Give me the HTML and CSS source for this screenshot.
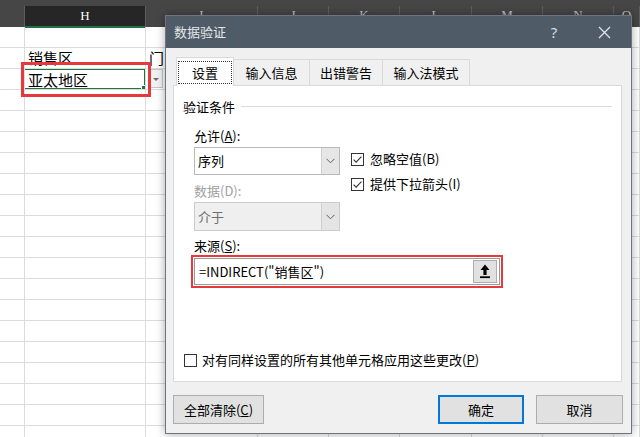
FILE: index.html
```html
<!DOCTYPE html>
<html lang="zh-CN">
<head>
<meta charset="utf-8">
<title>数据验证</title>
<link rel="stylesheet" href="styles.css">
</head>
<body>
<div class="sheet">
  <div class="colhead">
    <div class="hc"></div>
    <div class="hc sel">H</div>
    <div class="hc">I</div>
    <div class="hc">J</div>
    <div class="hc">K</div>
    <div class="hc">L</div>
    <div class="hc">M</div>
    <div class="hc">N</div>
    <div class="hc">O</div>
  </div>
  <div class="row"><div class="c"></div><div class="c"></div><div class="c"></div><div class="c"></div><div class="c"></div><div class="c"></div><div class="c"></div><div class="c"></div><div class="c"></div></div>
  <div class="row"><div class="c"></div><div class="c txt">销售区</div><div class="c txt">门</div><div class="c"></div><div class="c"></div><div class="c"></div><div class="c"></div><div class="c"></div><div class="c"></div></div>
  <div class="row"><div class="c"></div><div class="c txt active">亚太地区</div><div class="c"></div><div class="c"></div><div class="c"></div><div class="c"></div><div class="c"></div><div class="c"></div><div class="c"></div></div>
  <div class="row"><div class="c"></div><div class="c"></div><div class="c"></div><div class="c"></div><div class="c"></div><div class="c"></div><div class="c"></div><div class="c"></div><div class="c"></div></div>
  <div class="row"><div class="c"></div><div class="c"></div><div class="c"></div><div class="c"></div><div class="c"></div><div class="c"></div><div class="c"></div><div class="c"></div><div class="c"></div></div>
  <div class="row"><div class="c"></div><div class="c"></div><div class="c"></div><div class="c"></div><div class="c"></div><div class="c"></div><div class="c"></div><div class="c"></div><div class="c"></div></div>
  <div class="row"><div class="c"></div><div class="c"></div><div class="c"></div><div class="c"></div><div class="c"></div><div class="c"></div><div class="c"></div><div class="c"></div><div class="c"></div></div>
  <div class="row"><div class="c"></div><div class="c"></div><div class="c"></div><div class="c"></div><div class="c"></div><div class="c"></div><div class="c"></div><div class="c"></div><div class="c"></div></div>
  <div class="row"><div class="c"></div><div class="c"></div><div class="c"></div><div class="c"></div><div class="c"></div><div class="c"></div><div class="c"></div><div class="c"></div><div class="c"></div></div>
  <div class="row"><div class="c"></div><div class="c"></div><div class="c"></div><div class="c"></div><div class="c"></div><div class="c"></div><div class="c"></div><div class="c"></div><div class="c"></div></div>
  <div class="row"><div class="c"></div><div class="c"></div><div class="c"></div><div class="c"></div><div class="c"></div><div class="c"></div><div class="c"></div><div class="c"></div><div class="c"></div></div>
  <div class="row"><div class="c"></div><div class="c"></div><div class="c"></div><div class="c"></div><div class="c"></div><div class="c"></div><div class="c"></div><div class="c"></div><div class="c"></div></div>
  <div class="row"><div class="c"></div><div class="c"></div><div class="c"></div><div class="c"></div><div class="c"></div><div class="c"></div><div class="c"></div><div class="c"></div><div class="c"></div></div>
  <div class="row"><div class="c"></div><div class="c"></div><div class="c"></div><div class="c"></div><div class="c"></div><div class="c"></div><div class="c"></div><div class="c"></div><div class="c"></div></div>
  <div class="row"><div class="c"></div><div class="c"></div><div class="c"></div><div class="c"></div><div class="c"></div><div class="c"></div><div class="c"></div><div class="c"></div><div class="c"></div></div>
  <div class="row"><div class="c"></div><div class="c"></div><div class="c"></div><div class="c"></div><div class="c"></div><div class="c"></div><div class="c"></div><div class="c"></div><div class="c"></div></div>
  <div class="row"><div class="c"></div><div class="c"></div><div class="c"></div><div class="c"></div><div class="c"></div><div class="c"></div><div class="c"></div><div class="c"></div><div class="c"></div></div>
  <div class="row"><div class="c"></div><div class="c"></div><div class="c"></div><div class="c"></div><div class="c"></div><div class="c"></div><div class="c"></div><div class="c"></div><div class="c"></div></div>
  <div class="row"><div class="c"></div><div class="c"></div><div class="c"></div><div class="c"></div><div class="c"></div><div class="c"></div><div class="c"></div><div class="c"></div><div class="c"></div></div>
  <div class="row"><div class="c"></div><div class="c"></div><div class="c"></div><div class="c"></div><div class="c"></div><div class="c"></div><div class="c"></div><div class="c"></div><div class="c"></div></div>
</div>

<div class="cell-dd"></div>
<div class="annot"></div>

<div class="dialog">
  <div class="titlebar">
    <span class="title">数据验证</span>
    <span class="tb-btn help">?</span>
    <span class="tb-btn close"><svg width="13" height="13" viewBox="0 0 13 13"><path d="M1 1L12 12M12 1L1 12" stroke="#dfe3e7" stroke-width="1.3" fill="none"/></svg></span>
  </div>
  <div class="dlg-body">
    <div class="tabs">
      <div class="tab active"><span class="focus">设置</span></div>
      <div class="tab t-info">输入信息</div>
      <div class="tab t-err">出错警告</div>
      <div class="tab t-ime">输入法模式</div>
    </div>
    <div class="panel">
      <div class="group-title"><span>验证条件</span><i class="rule"></i></div>
      <div class="group">
        <div class="criteria">
          <div class="left">
            <div class="label">允许(<u>A</u>):</div>
            <div class="select"><span class="val">序列</span><span class="dd"><svg width="9" height="6" viewBox="0 0 9 6"><path d="M0.5 0.8L4.5 4.8L8.5 0.8" stroke="#606060" stroke-width="1" fill="none"/></svg></span></div>
            <div class="label dis">数据(D):</div>
            <div class="select disabled"><span class="val">介于</span><span class="dd"><svg width="9" height="6" viewBox="0 0 9 6"><path d="M0.5 0.8L4.5 4.8L8.5 0.8" stroke="#606060" stroke-width="1" fill="none"/></svg></span></div>
          </div>
          <div class="checks">
            <div class="check"><svg class="box" width="13" height="13" viewBox="0 0 13 13"><rect x="0.5" y="0.5" width="12" height="12" fill="#fff" stroke="#333"/><path d="M2.6 6.6L5.1 9.1L10.4 3.6" stroke="#333" stroke-width="1.1" fill="none"/></svg><span>忽略空值(B)</span></div>
            <div class="check"><svg class="box" width="13" height="13" viewBox="0 0 13 13"><rect x="0.5" y="0.5" width="12" height="12" fill="#fff" stroke="#333"/><path d="M2.6 6.6L5.1 9.1L10.4 3.6" stroke="#333" stroke-width="1.1" fill="none"/></svg><span>提供下拉箭头(I)</span></div>
          </div>
        </div>
        <div class="label src">来源(<u>S</u>):</div>
        <div class="hl">
          <div class="input">
            <span class="formula">=INDIRECT("销售区")</span>
            <span class="ref-btn"><svg width="12" height="15" viewBox="0 0 12 15"><path d="M6 0.5L10.5 6H7.6V11H4.4V6H1.5Z" fill="#000"/><rect x="1" y="12.3" width="10" height="1.8" fill="#000"/></svg></span>
          </div>
        </div>
      </div>
      <div class="check apply"><svg class="box" width="13" height="13" viewBox="0 0 13 13"><rect x="0.5" y="0.5" width="12" height="12" fill="#fff" stroke="#333"/></svg><span>对有同样设置的所有其他单元格应用这些更改(<u>P</u>)</span></div>
    </div>
    <div class="footer">
      <button class="btn clear">全部清除(<u>C</u>)</button>
      <div class="right">
        <button class="btn ok">确定</button>
        <button class="btn cancel">取消</button>
      </div>
    </div>
  </div>
</div>
</body>
</html>
```

FILE: styles.css
```css
* { box-sizing: border-box; }
html, body { margin: 0; padding: 0; }
body {
  width: 640px;
  height: 437px;
  overflow: hidden;
  position: relative;
  background: #fff;
  font-family: "Noto Sans CJK SC", "Noto Sans", sans-serif;
  color: #000;
}

/* ---------- spreadsheet ---------- */
.sheet { width: 640px; }
.colhead, .row {
  display: grid;
  grid-template-columns: 25px 121px 112px 71px 71px 72px 71px 71px 1fr;
}
.colhead {
  height: 27px;
  padding-top: 6px;
  background: #464646;
}
.hc {
  border-right: 1px solid #5e5e5e;
  color: #c4c4c4;
  font-family: "Liberation Serif", "DejaVu Serif", serif;
  font-size: 13px;
  line-height: 18px;
  text-align: center;
}
.hc.sel {
  background: #262626;
  color: #fff;
  border-bottom: 2px solid #217346;
  line-height: 20px;
}
.row {
  height: 21px;
  border-bottom: 1px solid #dcdcdc;
}
.c {
  border-right: 1px solid #dcdcdc;
}
.c.txt {
  font-size: 15px;
  line-height: 19px;
  padding-left: 3px;
  white-space: nowrap;
  overflow: hidden;
}
.c.active {
  position: relative;
  line-height: 21px;
}
.c.active::after {
  content: "";
  position: absolute;
  left: -2px; top: -1px; right: -1px; bottom: -1px;
  border: 2px solid #217346;
}
.c.active::before {
  content: "";
  position: absolute;
  right: -3px; bottom: -3px;
  width: 5px; height: 5px;
  background: #217346;
  border: 1px solid #fff;
  z-index: 2;
}

.cell-dd {
  position: absolute;
  left: 149px; top: 69px;
  width: 14px; height: 19px;
  background: #f2f2f2;
  border: 1px solid #c6c6c6;
}
.cell-dd::after {
  content: "";
  position: absolute;
  left: 3px; top: 8px;
  border-left: 3px solid transparent;
  border-right: 3px solid transparent;
  border-top: 3px solid #6a6a6a;
}
.annot {
  position: absolute;
  left: 21px; top: 62px;
  width: 130px; height: 35px;
  border: 3px solid #e5393e;
  z-index: 3;
}

/* ---------- dialog ---------- */
.dialog {
  position: absolute;
  left: 165px; top: 15px;
  width: 467px; height: 419px;
  background: #f0f0f0;
  border: 1px solid #6c7680;
  box-shadow: 0 0 9px rgba(0, 0, 0, 0.35);
  display: flex;
  flex-direction: column;
  font-size: 13px;
  line-height: 18px;
  z-index: 5;
}
.titlebar {
  height: 32px;
  background: #4f5b67;
  display: flex;
  align-items: center;
  padding-left: 8px;
  padding-right: 2px;
  color: #e4e7ea;
}
.title { flex: 1; font-size: 13px; }
.tb-btn {
  width: 50px;
  height: 32px;
  display: flex;
  align-items: center;
  justify-content: center;
}
.help { font-family: "Noto Sans", sans-serif; font-size: 15px; color: #d8dde2; }

.dlg-body {
  flex: 1;
  padding: 9px 8px 0 7px;
  display: flex;
  flex-direction: column;
}
.tabs {
  height: 28px;
  display: flex;
  align-items: flex-end;
  padding-left: 3px;
}
.tab {
  height: 26px;
  border: 1px solid #d9d9d9;
  border-bottom: none;
  margin-left: -1px;
  background: #f0f0f0;
  display: flex;
  align-items: center;
  justify-content: center;
  white-space: nowrap;
}
.tab.active {
  height: 29px;
  width: 58px;
  margin-left: 0;
  margin-bottom: -1px;
  background: #fff;
  position: relative;
  z-index: 2;
  padding: 3px 1px 2px 1px;
}
.focus {
  flex: 1;
  align-self: stretch;
  border: 1px dotted #333;
  display: flex;
  align-items: center;
  justify-content: center;
}
.t-info { width: 77px; }
.t-err { width: 74px; }
.t-ime { width: 88px; }

.panel {
  height: 297px;
  margin-right: 1px;
  background: #fff;
  border: 1px solid #d9d9d9;
  padding: 12px 9px 0 9px;
  display: flex;
  flex-direction: column;
}
.group-title {
  display: flex;
  align-items: center;
  gap: 6px;
  height: 18px;
}
.rule {
  flex: 1;
  height: 1px;
  background: #dcdcdc;
  margin-top: -1px;
}
.group { padding-left: 11px; }
.criteria { display: flex; gap: 11px; }
.left { width: 146px; }
.label { height: 18px; white-space: nowrap; }
.left .label:first-child { margin-top: 11px; }
.label.dis { margin-top: 7px; color: #a0a0a0; }
.label.src { margin-top: 6px; }
.select {
  margin-top: 2px;
  height: 28px;
  border: 1px solid #b9b9b9;
  background: #fff;
  display: flex;
}
.select .val {
  flex: 1;
  padding-left: 3px;
  line-height: 26px;
}
.select .dd {
  width: 18px;
  background: #e6e6e6;
  border-left: 1px solid #cfcfcf;
  display: flex;
  align-items: center;
  justify-content: center;
}
.select.disabled {
  background: #efefef;
  border-color: #cccccc;
  height: 29px;
}
.select.disabled .val { color: #6f6f6f; line-height: 27px; background: #efefef; }
.select.disabled .dd { background: #e4e4e4; }

.checks {
  margin-top: 33px;
  display: flex;
  flex-direction: column;
  gap: 5px;
}
.check {
  height: 20px;
  display: flex;
  align-items: center;
  gap: 6px;
  white-space: nowrap;
}
.box { flex: none; }

.hl {
  margin-left: -3px;
  width: 312px;
  border: 2px solid #e5393e;
  padding: 1px;
}
.input {
  height: 27px;
  border: 1px solid #9a9a9a;
  background: #fff;
  display: flex;
  align-items: center;
  padding: 0 2px 0 4px;
}
.formula { flex: 1; white-space: nowrap; }
.ref-btn {
  width: 24px;
  height: 23px;
  background: #e1e1e1;
  border: 1px solid #adadad;
  display: flex;
  align-items: center;
  justify-content: center;
}

.apply {
  margin-top: auto;
  margin-bottom: 11px;
  margin-left: 1px;
  gap: 5px;
}

.footer {
  margin-top: 13px;
  display: flex;
  justify-content: space-between;
}
.right { display: flex; gap: 12px; }
.btn {
  height: 29px;
  font-family: "Noto Sans CJK SC", "Noto Sans", sans-serif;
  font-size: 13px;
  line-height: 18px;
  color: #000;
  background: #e1e1e1;
  border: 1px solid #adadad;
  padding: 0;
}
.clear { width: 91px; }
.ok {
  width: 86px;
  border: 1px solid #0078d7;
  box-shadow: inset 0 0 0 1px #0078d7;
}
.cancel { width: 87px; }
```
